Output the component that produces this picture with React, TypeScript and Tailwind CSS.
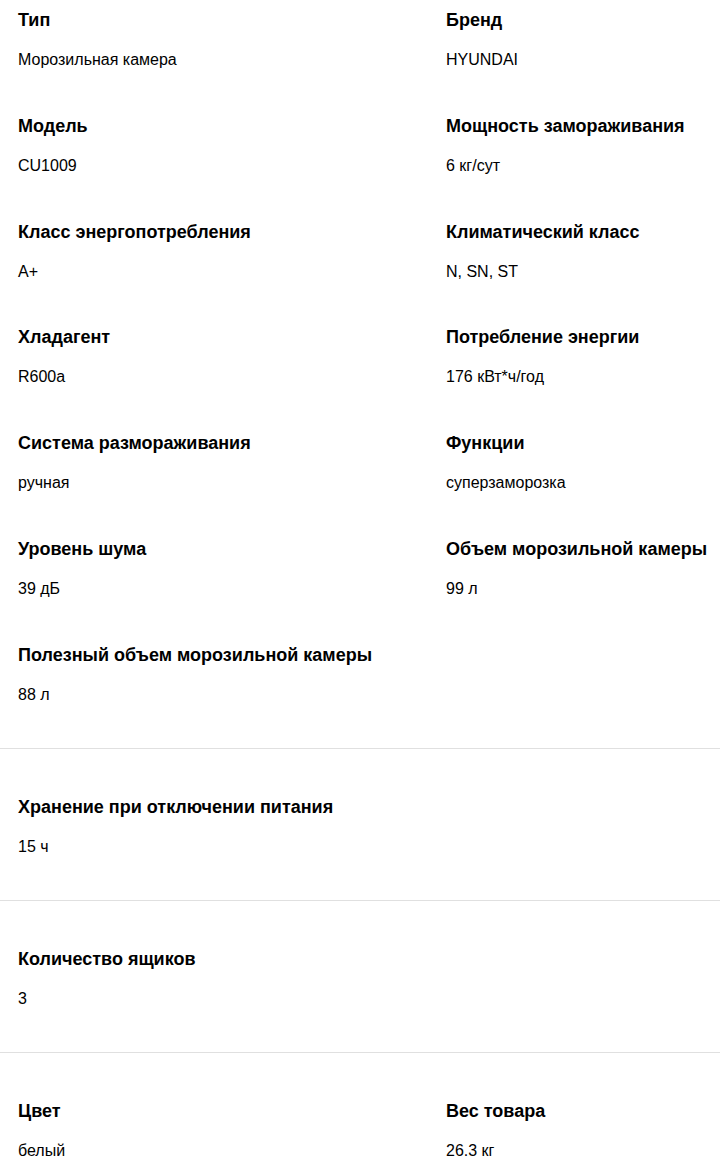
import React from "react";

type Item = { label: string; value: string };

const sections: Item[][] = [
  [
    { label: "Тип", value: "Морозильная камера" },
    { label: "Бренд", value: "HYUNDAI" },
    { label: "Модель", value: "CU1009" },
    { label: "Мощность замораживания", value: "6 кг/сут" },
    { label: "Класс энергопотребления", value: "A+" },
    { label: "Климатический класс", value: "N, SN, ST" },
    { label: "Хладагент", value: "R600a" },
    { label: "Потребление энергии", value: "176 кВт*ч/год" },
    { label: "Система размораживания", value: "ручная" },
    { label: "Функции", value: "суперзаморозка" },
    { label: "Уровень шума", value: "39 дБ" },
    { label: "Объем морозильной камеры", value: "99 л" },
    { label: "Полезный объем морозильной камеры", value: "88 л" },
  ],
  [{ label: "Хранение при отключении питания", value: "15 ч" }],
  [{ label: "Количество ящиков", value: "3" }],
  [
    { label: "Цвет", value: "белый" },
    { label: "Вес товара", value: "26.3 кг" },
  ],
];

function Spec({ item }: { item: Item }) {
  return (
    <div className="flex flex-col">
      <div className="text-[18px] leading-6 font-bold text-black whitespace-nowrap">{item.label}</div>
      <div className="mt-[18px] text-[16px] leading-5 text-black">{item.value}</div>
    </div>
  );
}

export default function App() {
  return (
    <div
      className="w-[720px] bg-white"
      style={{ fontFamily: '"Liberation Sans", Arial, sans-serif' }}
    >
      {sections.map((sec, i) => (
        <div
          key={i}
          className={
            i === 0
              ? "grid grid-cols-[428px_1fr] gap-y-[43.8px] px-[18px] pt-[8px] pb-[43px] border-b border-[#e0e0e0]"
              : i === sections.length - 1
              ? "grid grid-cols-[428px_1fr] gap-y-[44px] px-[18px] pt-[46px] pb-[43px]"
              : "grid grid-cols-[428px_1fr] gap-y-[44px] px-[18px] pt-[46px] pb-[43px] border-b border-[#e0e0e0]"
          }
        >
          {sec.map((it) => (
            <Spec key={it.label} item={it} />
          ))}
        </div>
      ))}
    </div>
  );
}
